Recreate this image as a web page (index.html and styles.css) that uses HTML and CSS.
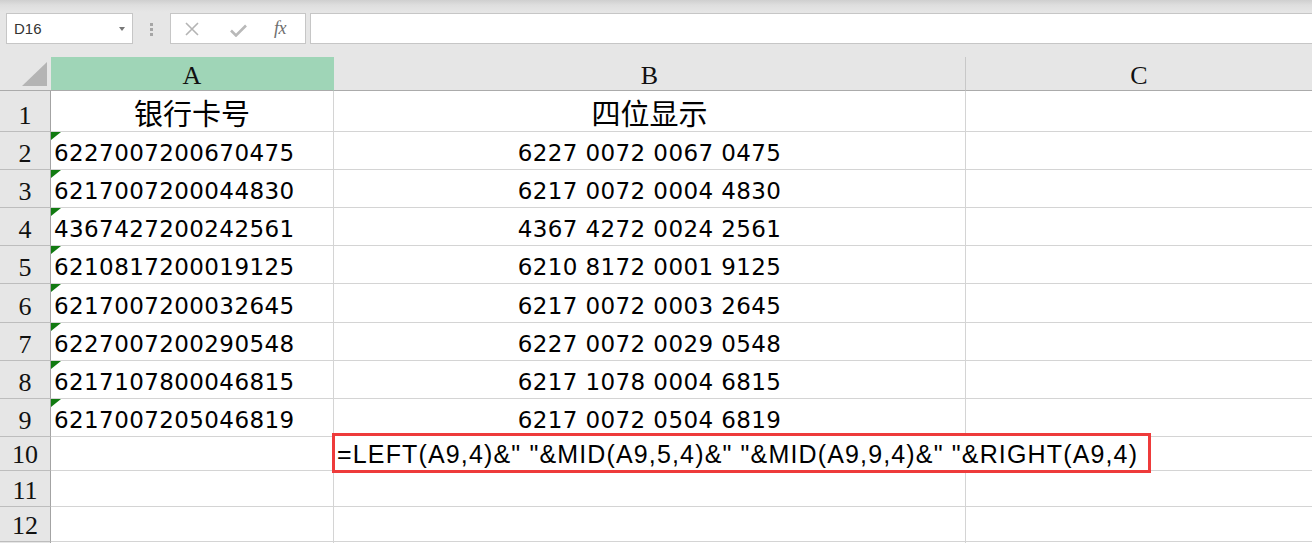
FILE: index.html
```html
<!DOCTYPE html>
<html lang="zh-CN">
<head>
<meta charset="utf-8">
<title>Sheet</title>
<link rel="stylesheet" href="styles.css">
</head>
<body>
<div class="app">
  <div class="toolbar">
    <div class="namebox"><span class="ref">D16</span><span class="caret"></span></div>
    <div class="grip"><i></i><i></i><i></i></div>
    <div class="fxbox">
      <svg class="ic-x" width="14" height="14" viewBox="0 0 14 14"><path d="M1 1 L13 13 M13 1 L1 13" stroke="#b4b4b4" stroke-width="1.6" fill="none"/></svg>
      <svg class="ic-ok" width="17" height="13" viewBox="0 0 17 13"><path d="M1 6.5 L6 11.5 L16 1.5" stroke="#b9b9b9" stroke-width="2.6" fill="none"/></svg>
      <span class="fx">fx</span>
    </div>
    <div class="formula"></div>
  </div>
  <div class="sheet">
    <div class="corner"><svg width="51" height="33" viewBox="0 0 51 33"><polygon points="22,29 47,5 47,29" fill="#b4b4b4"/></svg></div>
    <div class="ch cha">A</div>
    <div class="ch">B</div>
    <div class="ch last">C</div>

    <div class="rh">1</div>
    <div class="c center"><span class="cn">银行卡号</span></div>
    <div class="c center"><span class="cn">四位显示</span></div>
    <div class="c last"></div>

    <div class="rh">2</div>
    <div class="c a"><span class="num">6227007200670475</span></div>
    <div class="c center"><span class="num">6227 0072 0067 0475</span></div>
    <div class="c last"></div>

    <div class="rh">3</div>
    <div class="c a"><span class="num">6217007200044830</span></div>
    <div class="c center"><span class="num">6217 0072 0004 4830</span></div>
    <div class="c last"></div>

    <div class="rh">4</div>
    <div class="c a"><span class="num">4367427200242561</span></div>
    <div class="c center"><span class="num">4367 4272 0024 2561</span></div>
    <div class="c last"></div>

    <div class="rh">5</div>
    <div class="c a"><span class="num">6210817200019125</span></div>
    <div class="c center"><span class="num">6210 8172 0001 9125</span></div>
    <div class="c last"></div>

    <div class="rh">6</div>
    <div class="c a"><span class="num">6217007200032645</span></div>
    <div class="c center"><span class="num">6217 0072 0003 2645</span></div>
    <div class="c last"></div>

    <div class="rh">7</div>
    <div class="c a"><span class="num">6227007200290548</span></div>
    <div class="c center"><span class="num">6227 0072 0029 0548</span></div>
    <div class="c last"></div>

    <div class="rh">8</div>
    <div class="c a"><span class="num">6217107800046815</span></div>
    <div class="c center"><span class="num">6217 1078 0004 6815</span></div>
    <div class="c last"></div>

    <div class="rh">9</div>
    <div class="c a"><span class="num">6217007205046819</span></div>
    <div class="c center"><span class="num">6217 0072 0504 6819</span></div>
    <div class="c last"></div>

    <div class="rh">10</div>
    <div class="c"></div>
    <div class="c edit"><div class="editbox"><span class="ftext">=LEFT(A9,4)&amp;" "&amp;MID(A9,5,4)&amp;" "&amp;MID(A9,9,4)&amp;" "&amp;RIGHT(A9,4)</span></div></div>
    <div class="c last"></div>

    <div class="rh">11</div>
    <div class="c"></div>
    <div class="c"></div>
    <div class="c last"></div>

    <div class="rh">12</div>
    <div class="c"></div>
    <div class="c"></div>
    <div class="c last"></div>

    <div class="rh"></div>
    <div class="c"></div>
    <div class="c"></div>
    <div class="c last"></div>
  </div>
</div>
</body>
</html>
```

FILE: styles.css
```css
* { box-sizing: border-box; }
html, body { margin: 0; padding: 0; }
body {
  width: 1312px;
  height: 543px;
  overflow: hidden;
  background: #e6e6e6;
  font-family: "Liberation Sans", Arial, sans-serif;
  color: #000;
}
.app { width: 1312px; height: 543px; overflow: hidden; }

/* toolbar */
.toolbar {
  height: 57px;
  padding: 13px 0 0 6px;
  display: flex;
  align-items: flex-start;
  background: linear-gradient(#cfcfcf 0px, #dedede 5px, #e6e6e6 12px, #e6e6e6 100%);
}
.namebox {
  width: 127px;
  height: 31px;
  border: 1px solid #c6c6c6;
  background: #fff;
  display: flex;
  align-items: center;
  padding-left: 7px;
}
.ref { font-size: 15px; color: #333; }
.caret {
  margin-left: auto;
  margin-right: 7px;
  width: 0; height: 0;
  border-left: 3.5px solid transparent;
  border-right: 3.5px solid transparent;
  border-top: 4px solid #777;
}
.grip {
  margin: 10px 0 0 17px;
  display: flex;
  flex-direction: column;
  gap: 2px;
}
.grip i { display: block; width: 3px; height: 3px; background: #a6a6a6; }
.fxbox {
  margin-left: 17px;
  width: 136px;
  height: 31px;
  border: 1px solid #c6c6c6;
  background: #fff;
  display: flex;
  align-items: center;
}
.ic-x { margin-left: 14px; margin-top: 1px; }
.ic-ok { margin-left: 31px; margin-top: 3px; }
.fx {
  margin-left: 27px;
  font-family: "Liberation Serif", serif;
  font-style: italic;
  font-size: 18px;
  color: #6e6e6e;
  letter-spacing: -0.5px;
}
.formula {
  margin-left: 4px;
  flex: 1;
  height: 31px;
  border: 1px solid #c6c6c6;
  border-right: none;
  background: #fff;
}

/* sheet */
.sheet {
  display: grid;
  grid-template-columns: 51px 283px 632px 1fr;
  grid-template-rows: 34px 41px 38px 38px 38px 38px 39px 38px 38px 38px 34px 36px 35px 30px;
  background: #fff;
}
.corner {
  background: #e6e6e6;
  border-bottom: 1px solid #ababab;
}
.corner svg { display: block; }
.ch {
  background: #e6e6e6;
  border-bottom: 1px solid #ababab;
  border-right: 1px solid #c8c8c8;
  font-family: "Liberation Serif", serif;
  font-size: 26px;
  line-height: 26px;
  color: #111;
  display: flex;
  justify-content: center;
  align-items: flex-end;
  padding-bottom: 1px;
}
.ch.cha { background: #9fd5b7; border-right-color: #9fd5b7; }
.ch.last { border-right: none; }
.rh {
  background: #e6e6e6;
  border-right: 1px solid #a3a3a3;
  border-bottom: 1px solid #bdbdbd;
  font-family: "Liberation Serif", serif;
  font-size: 26px;
  line-height: 26px;
  color: #111;
  display: flex;
  justify-content: center;
  align-items: flex-end;
  padding-bottom: 2px;
}
.c {
  border-right: 1px solid #d4d4d4;
  border-bottom: 1px solid #d4d4d4;
  display: flex;
  align-items: flex-end;
  white-space: nowrap;
}
.c.last { border-right: none; }
.c.center { justify-content: center; }
.c.a { position: relative; padding-left: 3px; }
.c.a::before {
  content: "";
  position: absolute;
  left: 0; top: 0;
  width: 0; height: 0;
  border-top: 8px solid #117a11;
  border-right: 10px solid transparent;
}
.num {
  font-family: "DejaVu Sans", sans-serif;
  font-size: 23px;
  line-height: 23px;
  letter-spacing: 0.4px;
  padding-bottom: 4px;
}
.cn {
  font-family: "Noto Sans CJK SC", sans-serif;
  font-size: 29px;
  line-height: 29px;
  padding-bottom: 4px;
}
.c.edit { position: relative; }
.editbox {
  position: absolute;
  left: -2px;
  top: -4px;
  width: 819px;
  height: 40px;
  border: 3px solid #ee3b3b;
  background: #fff;
  z-index: 2;
  display: flex;
  align-items: flex-end;
  padding: 0 0 3px 2px;
}
.ftext {
  font-family: "Liberation Sans", Arial, sans-serif;
  font-size: 25px;
  line-height: 25px;
  letter-spacing: 1.15px;
  white-space: pre;
}
```
